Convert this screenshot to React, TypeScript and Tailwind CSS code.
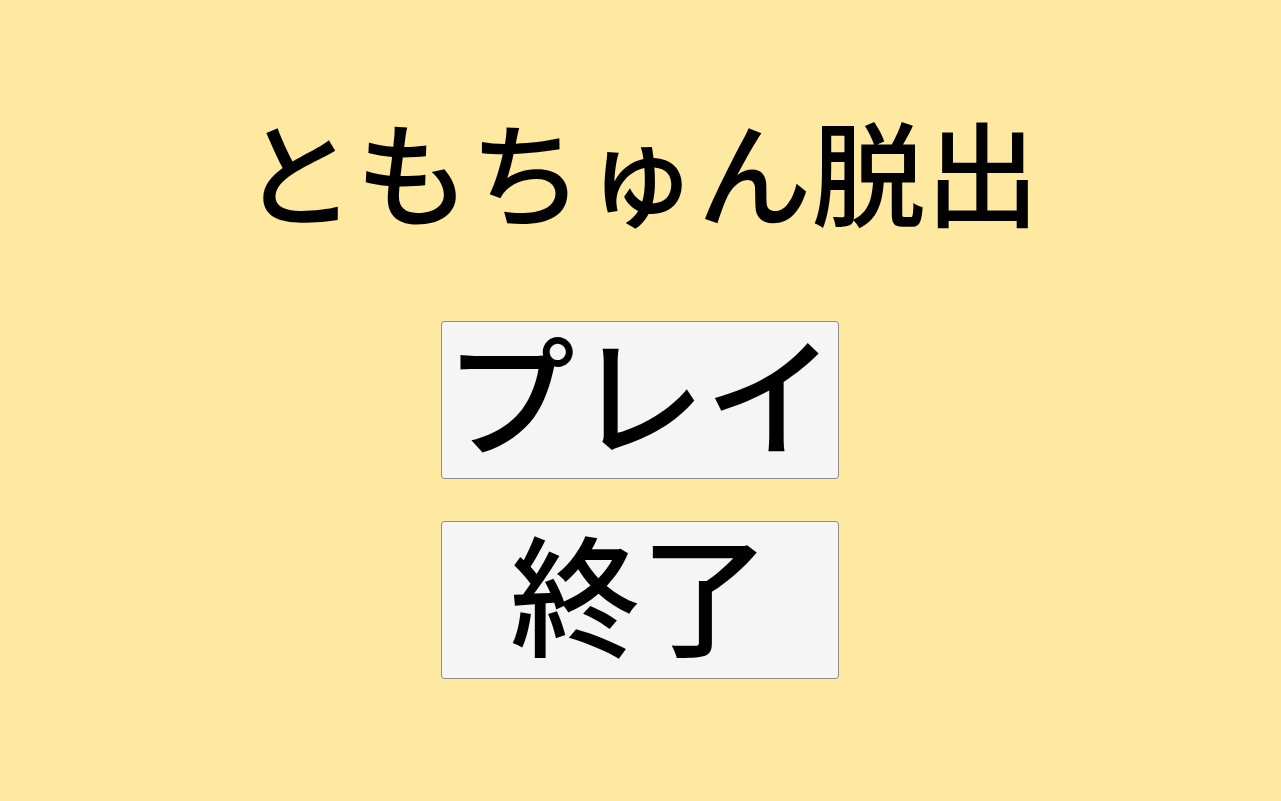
const font = { fontFamily: '"Noto Sans CJK JP", "Noto Sans", sans-serif' };

const MenuButton = ({ label }: { label: string }) => (
  <button
    type="button"
    className="flex h-[158px] w-[398px] items-start justify-center rounded-[3px] border border-[#8f8f8f] bg-[#f5f5f5] pt-[2px] text-[130px] leading-none font-medium text-black"
  >
    {label}
  </button>
);

export default function App() {
  return (
    <div
      className="flex h-[801px] w-full flex-col items-center bg-[#ffe8a0] pt-[112px]"
      style={font}
    >
      <h1 className="text-[114px] leading-none font-medium text-black">ともちゅん脱出</h1>
      <div className="mt-[95px] mr-px flex flex-col gap-[42px]">
        <MenuButton label="プレイ" />
        <MenuButton label="終了" />
      </div>
    </div>
  );
}
